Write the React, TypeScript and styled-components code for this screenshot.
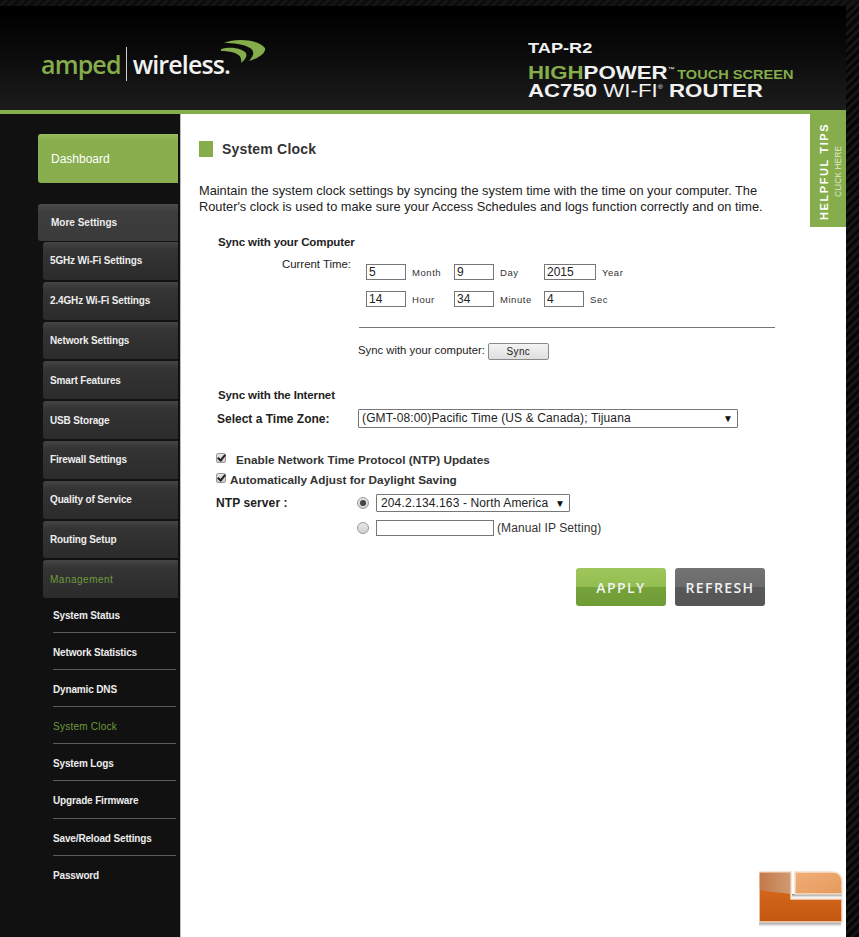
import React from 'react';
import styled, { createGlobalStyle } from 'styled-components';

const GlobalStyle = createGlobalStyle`
  html, body {
    margin: 0;
    padding: 0;
    background: #111;
  }
  * {
    box-sizing: border-box;
  }
`;

const stripes = `repeating-linear-gradient(135deg, #060606 0, #060606 3px, #161616 3px, #161616 6px)`;

const Page = styled.div`
  position: relative;
  width: 859px;
  height: 937px;
  display: flex;
  overflow: hidden;
  font-family: 'Liberation Sans', Arial, sans-serif;
  background: ${stripes};
`;

const Frame = styled.div`
  width: 846px;
  display: flex;
  flex-direction: column;
`;

const TopStripes = styled.div`
  position: absolute;
  top: 0;
  left: 0;
  width: 100%;
  height: 6px;
  background: repeating-linear-gradient(135deg, #0c0c0c 0, #0c0c0c 3px, #151515 3px, #151515 6px);
`;

const Header = styled.header`
  height: 114px;
  flex: none;
  display: flex;
  justify-content: space-between;
  border-bottom: 4px solid #84ad4b;
  background: linear-gradient(#000 10px, #0a0a0a 50px, #1c1c1c 110px);
`;

const Logo = styled.div`
  position: relative;
  display: flex;
  align-items: center;
  margin: 47px 0 0 41px;
  height: 34px;
  font-family: 'Open Sans', sans-serif;
  font-size: 25px;
  font-weight: 600;
  letter-spacing: -0.85px;
`;

const LogoGreen = styled.span`
  color: #86ad4c;
`;

const LogoBar = styled.span`
  width: 1px;
  height: 34px;
  margin: 0 6px 0 5px;
  background: #cfcfcf;
`;

const LogoWhite = styled.span`
  color: #f2f2f2;
`;

const LogoSwoosh = styled.svg`
  position: absolute;
  left: 180px;
  top: -7px;
`;

const Model = styled.div`
  width: 318px;
  padding-top: 41px;
  display: flex;
  flex-direction: column;
  color: #f1f1f1;
  font-weight: 700;
`;

const ModelName = styled.div`
  font-size: 14px;
  line-height: 15px;
  transform: scaleX(1.3);
  transform-origin: left;
`;

const ModelLine = styled.div`
  height: 18px;
  margin-top: 8px;
  font-size: 19px;
  line-height: 18px;
  white-space: nowrap;
  transform: scaleX(1.17);
  transform-origin: left;
`;

const ModelLineTwo = styled(ModelLine)`
  margin-top: 0;
`;

const Green = styled.span`
  color: #86ad4c;
`;

const TouchScreen = styled(Green)`
  margin-left: -3px;
  font-size: 12.45px;
`;

const Mark = styled.sup`
  font-size: 6px;
  font-weight: 400;
  line-height: 0;
  vertical-align: 8px;
`;

const Thin = styled.span`
  font-weight: 400;
`;

const Body = styled.div`
  flex: 1;
  display: flex;
  position: relative;
  min-height: 0;
`;

const Sidebar = styled.nav`
  width: 181px;
  flex: none;
  padding: 20px 2px 0 38px;
  background: #111;
  border-right: 1px solid #bbb;
`;

const Dashboard = styled.div`
  height: 49px;
  display: flex;
  align-items: center;
  padding-left: 13px;
  border-radius: 3px 0 0 3px;
  background: linear-gradient(#9abd5f 0, #88ae4d 6px, #88ae4d 100%);
  color: #fff;
  font-size: 12px;
`;

const MoreSettings = styled.div`
  height: 37px;
  margin-top: 21px;
  display: flex;
  align-items: center;
  padding-left: 13px;
  border-radius: 3px 0 0 3px;
  background: linear-gradient(#4b4b4b 0, #3e3e3e 8px, #3a3a3a 100%);
  color: #ededed;
  font-size: 10px;
  font-weight: 700;
`;

const SubList = styled.div`
  margin: 1px 0 0 5px;
`;

const SubItem = styled.div<{ $active?: boolean }>`
  height: 37.8px;
  margin-bottom: 2px;
  display: flex;
  align-items: center;
  padding-left: 7px;
  border-radius: 3px 0 0 3px;
  background: linear-gradient(#444 0, #343434 8px, #2b2b2b 100%);
  color: ${({ $active }) => ($active ? '#6f9a3c' : '#ededed')};
  font-size: 10px;
  font-weight: ${({ $active }) => ($active ? 400 : 700)};
  letter-spacing: ${({ $active }) => ($active ? '0.5px' : '-0.15px')};
`;

const LinkList = styled.div`
  margin: -4.5px 2px 0 15px;
`;

const LinkItem = styled.div<{ $active?: boolean }>`
  height: 37.15px;
  display: flex;
  align-items: center;
  padding-top: 3px;
  border-bottom: 1px solid #5c5c5c;
  color: ${({ $active }) => ($active ? '#6f9a3c' : '#ededed')};
  font-size: 10px;
  font-weight: ${({ $active }) => ($active ? 400 : 700)};
  letter-spacing: ${({ $active }) => ($active ? '0.25px' : '-0.15px')};
  &:last-child {
    border-bottom: none;
  }
`;

const Content = styled.main`
  position: relative;
  flex: 1;
  padding: 27px 0 0 18px;
  background: #fff;
  color: #222;
`;

const TitleRow = styled.div`
  display: flex;
  align-items: center;
  gap: 9px;
  height: 16px;
`;

const TitleMark = styled.span`
  width: 14px;
  height: 16px;
  background: #86ad4c;
`;

const Title = styled.h1`
  margin: 0;
  font-size: 14px;
  font-weight: 700;
  letter-spacing: 0.2px;
  color: #333;
`;

const Intro = styled.p`
  margin: 26px 0 0;
  font-size: 12.8px;
  line-height: 16px;
  color: #222;
`;

const SectionTitle = styled.div`
  margin-left: 19px;
  font-size: 11.5px;
  font-weight: 700;
  letter-spacing: -0.12px;
  line-height: 14px;
  color: #222;
`;

const ComputerSection = styled.section`
  margin-top: 20px;
`;

const TimeRow = styled.div`
  display: flex;
  margin-top: 8px;
`;

const TimeLabel = styled.div`
  width: 152px;
  text-align: right;
  font-size: 11.4px;
  line-height: 14px;
`;

const TimeGrid = styled.div`
  display: grid;
  grid-template-columns: 88px 90px auto;
  row-gap: 11px;
  margin: 7px 0 0 15px;
`;

const TimeCell = styled.div`
  display: flex;
  align-items: center;
  gap: 6px;
`;

const TextBox = styled.input<{ $width: number }>`
  width: ${({ $width }) => $width}px;
  height: 16px;
  padding: 0 2px;
  border: 1px solid #777;
  border-radius: 0;
  outline: none;
  background: #fff;
  font-family: inherit;
  font-size: 12px;
  color: #222;
`;

const UnitLabel = styled.span`
  font-size: 9.5px;
  letter-spacing: 0.55px;
  color: #333;
`;

const Divider = styled.hr`
  width: 416px;
  height: 1px;
  margin: 20px 0 0 160px;
  border: none;
  background: #777;
`;

const SyncRow = styled.div`
  display: flex;
  align-items: center;
  height: 17px;
  margin: 15px 0 0 159px;
  gap: 3px;
  font-size: 11.3px;
`;

const SyncLabel = styled.span`
  margin-bottom: 3px;
`;

const SyncButton = styled.button`
  width: 61px;
  height: 17px;
  padding: 0;
  border: 1px solid #8a8a8a;
  border-radius: 2px;
  background: linear-gradient(#f4f4f4, #dedede);
  font-family: inherit;
  font-size: 10px;
  letter-spacing: 0.3px;
  color: #222;
`;

const InternetSection = styled.section`
  margin-top: 28px;
`;

const ZoneRow = styled.div`
  display: flex;
  align-items: center;
  margin: 7px 0 0 18px;
`;

const FieldLabel = styled.div`
  width: 141px;
  flex: none;
  font-size: 12px;
  font-weight: 700;
  color: #222;
`;

const SelectBox = styled.div<{ $width: number }>`
  width: ${({ $width }) => $width}px;
  display: flex;
  align-items: center;
  justify-content: space-between;
  border: 1px solid #777;
  border-radius: 1px;
  background: #fff;
  font-size: 12px;
  color: #222;
  letter-spacing: 0.13px;
`;

const ZoneSelect = styled(SelectBox)`
  height: 19px;
  padding: 0 4px 1px 3px;
`;

const NtpSelect = styled(SelectBox)`
  height: 18px;
  padding: 0 4px 0 4px;
`;

const Arrow = styled.span`
  font-size: 10px;
  color: #111;
`;

const CheckRow = styled.label<{ $gap: number; $top: number }>`
  display: flex;
  align-items: center;
  gap: ${({ $gap }) => $gap}px;
  height: 14px;
  margin: ${({ $top }) => $top}px 0 0 17px;
  font-size: 11.75px;
  font-weight: 700;
  color: #333;
`;

const CheckBox = styled.input`
  appearance: none;
  position: relative;
  width: 10px;
  height: 10px;
  margin: 0 0 3px;
  border: 1px solid #9a9a9a;
  border-radius: 2px;
  background: linear-gradient(#e4e4e4, #cfcfcf);
  &::after {
    content: '';
    position: absolute;
    left: 2px;
    top: -1px;
    width: 3px;
    height: 6px;
    border: solid #222;
    border-width: 0 2px 2px 0;
    transform: rotate(40deg);
  }
`;

const NtpRow = styled.div`
  display: flex;
  align-items: center;
  margin: 8px 0 0 17px;
`;

const NtpLabel = styled.div`
  width: 141px;
  flex: none;
  font-size: 12px;
  font-weight: 700;
  color: #222;
  letter-spacing: 0.1px;
`;

const Radio = styled.input`
  appearance: none;
  position: relative;
  width: 12px;
  height: 12px;
  margin: 0 7px 0 0;
  border: 1px solid #9a9a9a;
  border-radius: 50%;
  background: linear-gradient(#e6e6e6, #d2d2d2);
  &:checked::after {
    content: '';
    position: absolute;
    left: 2px;
    top: 2px;
    width: 6px;
    height: 6px;
    border-radius: 50%;
    background: #444;
  }
`;

const ManualHint = styled.span`
  margin-left: 3px;
  font-size: 12px;
  letter-spacing: 0.1px;
  color: #333;
`;

const Actions = styled.div`
  display: flex;
  gap: 9px;
  margin: 32px 0 0 377px;
`;

const ActionButton = styled.button<{ $tone: 'green' | 'gray' }>`
  width: 90px;
  height: 38px;
  padding: 0;
  border: none;
  border-radius: 3px;
  background: ${({ $tone }) =>
    $tone === 'green'
      ? 'linear-gradient(#9fc75c 0, #93bd50 50%, #76a23a 50%, #6f9c35 100%)'
      : 'linear-gradient(#737373 0, #6b6b6b 50%, #585858 50%, #565656 100%)'};
  color: #f2f2f2;
  font-family: 'Open Sans', sans-serif;
  font-size: 14px;
  font-weight: 600;
  letter-spacing: 1.4px;
`;

const TipsTab = styled.div`
  position: absolute;
  top: 0;
  right: 0;
  width: 36px;
  height: 113px;
  display: flex;
  flex-direction: column;
  justify-content: flex-start;
  gap: 1px;
  padding: 7px 7px 0 0;
  background: #86ad4c;
  color: #fff;
  writing-mode: vertical-rl;
  transform: rotate(180deg);
`;

const TipsMain = styled.span`
  font-size: 11px;
  font-weight: 700;
  letter-spacing: 1.6px;
  line-height: 14px;
  white-space: nowrap;
`;

const TipsSub = styled.span`
  margin-top: 23px;
  font-size: 8.5px;
  line-height: 12px;
  color: #dfe9cf;
  white-space: nowrap;
`;

const Badge = styled.svg`
  position: absolute;
  right: 3px;
  bottom: 9px;
`;

const settingsItems = [
  '5GHz Wi-Fi Settings',
  '2.4GHz Wi-Fi Settings',
  'Network Settings',
  'Smart Features',
  'USB Storage',
  'Firewall Settings',
  'Quality of Service',
  'Routing Setup',
];

const managementLinks = [
  'System Status',
  'Network Statistics',
  'Dynamic DNS',
  'System Clock',
  'System Logs',
  'Upgrade Firmware',
  'Save/Reload Settings',
  'Password',
];

const timeFields = [
  { value: '5', unit: 'Month', width: 40 },
  { value: '9', unit: 'Day', width: 40 },
  { value: '2015', unit: 'Year', width: 52 },
  { value: '14', unit: 'Hour', width: 40 },
  { value: '34', unit: 'Minute', width: 40 },
  { value: '4', unit: 'Sec', width: 40 },
];

const App: React.FC = () => {
  return (
    <>
      <GlobalStyle />
      <Page>
        <Frame>
          <Header>
            <Logo>
              <LogoGreen>amped</LogoGreen>
              <LogoBar />
              <LogoWhite>wireless.</LogoWhite>
              <LogoSwoosh width="46" height="28" viewBox="0 0 46 28">
                <path d="M3 3 C14 -2 37 -1 44 8 C45 13 38 18 28 21 C33 16 34 11 29 8 C23 4 12 3 3 3Z" fill="#86ad4c" />
                <path d="M-4 11 C4 6 18 7 24 12 C27 15 25 19 20 23 C21 18 19 15 14 13 C8 11 2 11 -4 11Z" fill="#86ad4c" />
              </LogoSwoosh>
            </Logo>
            <Model>
              <ModelName>TAP-R2</ModelName>
              <ModelLine>
                <Green>HIGH</Green>POWER<Mark>™</Mark> <TouchScreen>TOUCH SCREEN</TouchScreen>
              </ModelLine>
              <ModelLineTwo>
                AC750 <Thin>WI-FI</Thin><Mark>®</Mark> ROUTER
              </ModelLineTwo>
            </Model>
          </Header>
          <Body>
            <Sidebar>
              <Dashboard>Dashboard</Dashboard>
              <MoreSettings>More Settings</MoreSettings>
              <SubList>
                {settingsItems.map((item) => (
                  <SubItem key={item}>{item}</SubItem>
                ))}
                <SubItem $active>Management</SubItem>
              </SubList>
              <LinkList>
                {managementLinks.map((link) => (
                  <LinkItem key={link} $active={link === 'System Clock'}>
                    {link}
                  </LinkItem>
                ))}
              </LinkList>
            </Sidebar>
            <Content>
              <TitleRow>
                <TitleMark />
                <Title>System Clock</Title>
              </TitleRow>
              <Intro>
                Maintain the system clock settings by syncing the system time with the time on your computer. The
                <br />
                Router's clock is used to make sure your Access Schedules and logs function correctly and on time.
              </Intro>
              <ComputerSection>
                <SectionTitle>Sync with your Computer</SectionTitle>
                <TimeRow>
                  <TimeLabel>Current Time:</TimeLabel>
                  <TimeGrid>
                    {timeFields.map((field) => (
                      <TimeCell key={field.unit}>
                        <TextBox $width={field.width} value={field.value} readOnly />
                        <UnitLabel>{field.unit}</UnitLabel>
                      </TimeCell>
                    ))}
                  </TimeGrid>
                </TimeRow>
                <Divider />
                <SyncRow>
                  <SyncLabel>Sync with your computer:</SyncLabel>
                  <SyncButton type="button">Sync</SyncButton>
                </SyncRow>
              </ComputerSection>
              <InternetSection>
                <SectionTitle>Sync with the Internet</SectionTitle>
                <ZoneRow>
                  <FieldLabel>Select a Time Zone:</FieldLabel>
                  <ZoneSelect $width={380}>
                    (GMT-08:00)Pacific Time (US &amp; Canada); Tijuana
                    <Arrow>▼</Arrow>
                  </ZoneSelect>
                </ZoneRow>
                <CheckRow $gap={10} $top={24}>
                  <CheckBox type="checkbox" checked readOnly />
                  Enable Network Time Protocol (NTP) Updates
                </CheckRow>
                <CheckRow $gap={4} $top={6}>
                  <CheckBox type="checkbox" checked readOnly />
                  Automatically Adjust for Daylight Saving
                </CheckRow>
                <NtpRow>
                  <NtpLabel>NTP server :</NtpLabel>
                  <Radio type="radio" checked readOnly />
                  <NtpSelect $width={194}>
                    204.2.134.163 - North America
                    <Arrow>▼</Arrow>
                  </NtpSelect>
                </NtpRow>
                <NtpRow>
                  <NtpLabel />
                  <Radio type="radio" readOnly />
                  <TextBox $width={118} value="" readOnly />
                  <ManualHint>(Manual IP Setting)</ManualHint>
                </NtpRow>
              </InternetSection>
              <Actions>
                <ActionButton type="button" $tone="green">APPLY</ActionButton>
                <ActionButton type="button" $tone="gray">REFRESH</ActionButton>
              </Actions>
              <TipsTab>
                <TipsMain>HELPFUL TIPS</TipsMain>
                <TipsSub>CLICK HERE</TipsSub>
              </TipsTab>
              <Badge width="84" height="60" viewBox="0 0 84 60">
                <defs>
                  <linearGradient id="badgeBase" x1="0" y1="0" x2="0" y2="1">
                    <stop offset="0" stopColor="#de6f22" />
                    <stop offset="1" stopColor="#c2570f" />
                  </linearGradient>
                  <linearGradient id="badgeTop" x1="0" y1="0" x2="1" y2="1">
                    <stop offset="0" stopColor="#f0ae78" />
                    <stop offset="1" stopColor="#e69a5c" />
                  </linearGradient>
                  <linearGradient id="badgeGloss" x1="0" y1="0" x2="1" y2="0">
                    <stop offset="0" stopColor="#c4794a" />
                    <stop offset="1" stopColor="#cf9a72" />
                  </linearGradient>
                  <linearGradient id="badgeShade" x1="0" y1="0" x2="0" y2="1">
                    <stop offset="0" stopColor="#777" />
                    <stop offset="1" stopColor="#fff" stopOpacity="0" />
                  </linearGradient>
                </defs>
                <rect x="0" y="54" width="82" height="6" fill="url(#badgeShade)" />
                <rect x="33" y="26" width="50" height="5" fill="url(#badgeShade)" />
                <path d="M0 4 H32 V31 H83 V54 H0Z" fill="url(#badgeBase)" stroke="#f6e0cc" strokeWidth="1.5" />
                <path d="M0.8 4.8 H31.2 V26 C20 24 10 24 0.8 22Z" fill="url(#badgeGloss)" />
                <path d="M36 4 H73 Q83 4 83 14 V26 H36Z" fill="url(#badgeTop)" stroke="#f6e0cc" strokeWidth="1.5" />
              </Badge>
            </Content>
          </Body>
        </Frame>
        <TopStripes />
      </Page>
    </>
  );
};

export default App;
